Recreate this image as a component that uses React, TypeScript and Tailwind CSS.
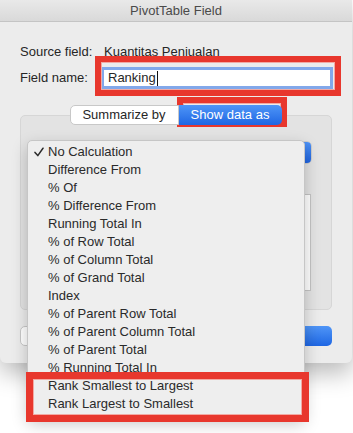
const items = [
  'No Calculation',
  'Difference From',
  '% Of',
  '% Difference From',
  'Running Total In',
  '% of Row Total',
  '% of Column Total',
  '% of Grand Total',
  'Index',
  '% of Parent Row Total',
  '% of Parent Column Total',
  '% of Parent Total',
  '% Running Total In',
  'Rank Smallest to Largest',
  'Rank Largest to Smallest',
];

function Check() {
  return (
    <svg width="10" height="10" viewBox="0 0 10 10" className="shrink-0">
      <path d="M1 5.4 L3.8 8.6 L9 1.2" fill="none" stroke="#2b2b2b" strokeWidth="1.5" strokeLinecap="round" strokeLinejoin="round" />
    </svg>
  );
}

export default function App() {
  return (
    <div className="relative w-[353px] h-[433px] bg-white overflow-hidden text-[13px] text-[#262626] font-['Liberation_Sans',Arial,sans-serif]">
      {/* Dialog window */}
      <div className="w-[352px] h-[363px] bg-[#ececec] rounded-b-[6px] shadow-[0_10px_24px_rgba(0,0,0,0.28)] flex flex-col">
        <div className="h-[22px] shrink-0 bg-gradient-to-b from-[#e9e9e9] to-[#d9d9d9] border-b border-[#c4c4c4] flex items-center justify-center text-[#4a4a4a] leading-[16px]">
          PivotTable Field
        </div>

        <div className="flex flex-col px-[20px] pt-[22px]">
          <div className="flex items-center leading-[16px]">
            <span className="w-[84px] shrink-0">Source field:</span>
            <span>Kuantitas Penjualan</span>
          </div>

          <div className="flex items-center mt-[7px]">
            <span className="w-[81px] shrink-0 leading-[16px]">Field name:</span>
            <div className="flex-1 h-[22px] mr-[-1px] border-[3px] border-[#82a8ea] bg-white flex items-center pl-[4px] leading-[16px]">
              Ranking
              <span className="w-px h-[15px] bg-[#111] ml-px" />
            </div>
          </div>

          {/* Segmented control */}
          <div className="relative z-10 flex justify-center mt-[16px] h-[20px]">
            <div className="flex ml-[-1px]">
              <div className="w-[109px] h-[20px] bg-white border border-[#c8c8c8] rounded-l-[5px] flex items-center justify-center leading-[16px]">
                Summarize by
              </div>
              <div className="w-[103px] h-[20px] bg-gradient-to-b from-[#4f95f7] to-[#1e66e3] rounded-r-[5px] text-white flex items-center justify-center leading-[16px]">
                Show data as
              </div>
            </div>
          </div>

          {/* Group box */}
          <div className="-mt-[10px] h-[195px] bg-[#e3e3e3] border border-[#d6d6d6] rounded-[5px] flex flex-col px-[19px] pt-[25px]">
            <div className="h-[23px] bg-white rounded-[5px] border border-[#cdcdcd] flex justify-end overflow-hidden">
              <div className="w-[17px] h-full bg-gradient-to-b from-[#4d92f6] to-[#1f64e0] flex flex-col items-center justify-center text-white text-[7px] leading-[7px]">
                <span>▲</span>
                <span>▼</span>
              </div>
            </div>
            <div className="mt-[30px] h-[97px] mr-[1px] bg-white border border-[#c4c4c4]" />
          </div>

          {/* Buttons (mostly covered by the menu) */}
          <div className="flex items-center mt-[16px] h-[20px]">
            <div className="w-[90px] h-[20px] bg-white border border-[#c8c8c8] rounded-[5px]" />
            <div className="flex-1" />
            <div className="w-[72px] h-[20px] bg-white border border-[#c8c8c8] rounded-[5px] mr-[10px]" />
            <div className="w-[72px] h-[20px] bg-gradient-to-b from-[#4f95f7] to-[#1e66e3] rounded-[5px]" />
          </div>
        </div>
      </div>

      {/* Popup menu */}
      <div className="absolute left-[27px] top-[140px] w-[278px] h-[278px] bg-[#eeeeee] border border-[#c6c6c6] rounded-[5px] shadow-[0_6px_16px_rgba(0,0,0,0.22)] pt-[2px] text-[#2a2a2a]">
        {items.map((label, i) => (
          <div key={label} className="h-[18px] flex items-center leading-[16px]">
            <div className="w-[20px] pl-[6px] flex items-center">{i === 0 && <Check />}</div>
            <span>{label}</span>
          </div>
        ))}
      </div>

      {/* Annotation boxes */}
      <div className="absolute left-[95px] top-[56px] w-[246px] h-[40px] border-[6px] border-[#e8372d] shadow-[inset_0_0_0_1px_#f2aaa4]" />
      <div className="absolute left-[177px] top-[97px] w-[110px] h-[30px] border-[6px] border-[#e8372d] shadow-[inset_0_0_0_1px_#f2aaa4]" />
      <div className="absolute left-[26px] top-[372px] w-[283px] h-[50px] border-[7px] border-[#e8372d] shadow-[inset_0_0_0_1px_#f2aaa4]" />
    </div>
  );
}
